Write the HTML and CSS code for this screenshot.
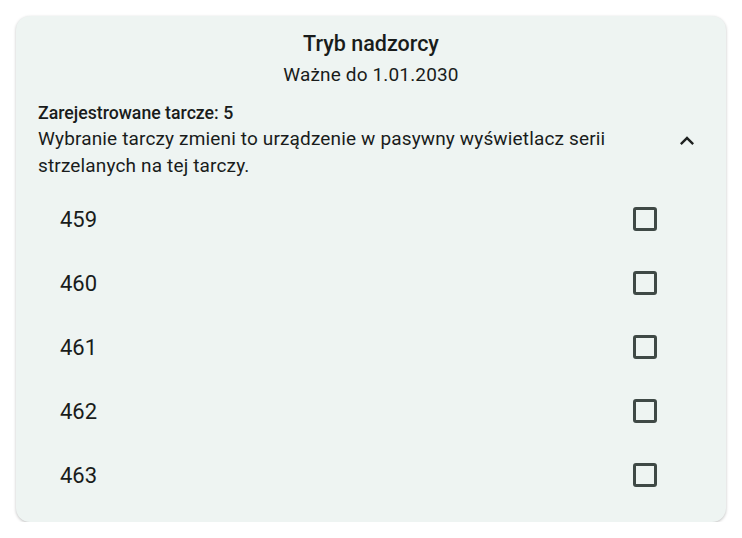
FILE: index.html
```html
<!DOCTYPE html>
<html lang="pl">
<head>
    <meta charset="UTF-8">
    <meta name="viewport" content="width=device-width, initial-scale=1.0">
    <title>Tryb nadzorcy</title>
    <link rel="stylesheet" href="styles.css">
</head>
<body>

    <div class="card">
        <!-- Header -->
        <h1 class="card-title">Tryb nadzorcy</h1>
        <p class="card-subtitle">Ważne do 1.01.2030</p>

        <!-- Expandable section -->
        <div class="section">
            <div class="section-text">
                <h2>Zarejestrowane tarcze: 5</h2>
                <p>Wybranie tarczy zmieni to urządzenie w pasywny wyświetlacz serii strzelanych na tej tarczy.</p>
            </div>
            <span class="chevron">
                <svg viewBox="0 0 24 24" width="28" height="28"><path d="M12 8l-6 6 1.41 1.41L12 10.83l4.59 4.58L18 14z"/></svg>
            </span>
        </div>

        <!-- Target list -->
        <ul class="targets">
            <li><span>459</span><span class="checkbox"></span></li>
            <li><span>460</span><span class="checkbox"></span></li>
            <li><span>461</span><span class="checkbox"></span></li>
            <li><span>462</span><span class="checkbox"></span></li>
            <li><span>463</span><span class="checkbox"></span></li>
        </ul>
    </div>

</body>
</html>
```

FILE: styles.css
```css
/* General Reset */
* {
    margin: 0;
    padding: 0;
    box-sizing: border-box;
}

body {
    font-family: 'Roboto', 'Noto Sans', sans-serif;
    background-color: #fff;
    color: #191c1b;
    padding: 16px 16px 0 16px;
}

/* Card */
.card {
    background-color: #eef4f2;
    border-radius: 14px;
    box-shadow: 0 1px 3px rgba(0, 0, 0, 0.25);
    padding: 14px 0 15px;
}

.card-title {
    text-align: center;
    font-size: 21.5px;
    font-weight: 500;
    line-height: 28px;
}

.card-subtitle {
    text-align: center;
    font-size: 19px;
    letter-spacing: 0.15px;
    line-height: 28px;
    margin-top: 3px;
}

/* Expandable section */
.section {
    display: flex;
    align-items: center;
    margin-top: 13px;
    padding: 0 25px 0 22px;
}

.section-text {
    flex: 1;
    padding-right: 40px;
}

.section h2 {
    font-size: 17.7px;
    font-weight: 500;
    line-height: 23px;
}

.section p {
    font-size: 19px;
    letter-spacing: 0.15px;
    line-height: 27px;
}

.chevron svg {
    display: block;
    fill: #1e2120;
}

/* Target list */
.targets {
    list-style: none;
    margin-top: 8px;
}

.targets li {
    display: flex;
    justify-content: space-between;
    align-items: center;
    height: 64px;
    padding: 0 69px 0 44px;
    font-size: 22px;
}

.checkbox {
    width: 24px;
    height: 24px;
    border: 3px solid #3f4946;
    border-radius: 3px;
}
```
